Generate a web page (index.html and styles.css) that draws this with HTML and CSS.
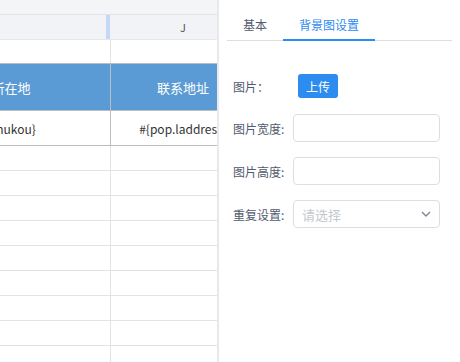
FILE: index.html
```html
<!DOCTYPE html>
<html lang="zh-CN">

<head>
    <meta charset="UTF-8">
    <title>背景图设置</title>
    <link rel="stylesheet" href="styles.css">
</head>

<body>
    <div class="sheet">
        <div class="topbar"></div>
        <div class="grid">
            <div class="row col-head">
                <div class="cell col-i handle">I</div>
                <div class="cell col-j">J</div>
            </div>
            <div class="row blank">
                <div class="cell col-i"></div>
                <div class="cell col-j"></div>
            </div>
            <div class="row title">
                <div class="cell col-i">户口所在地</div>
                <div class="cell col-j">联系地址</div>
            </div>
            <div class="row data">
                <div class="cell col-i">#{pop.hukou}</div>
                <div class="cell col-j">#{pop.laddress}</div>
            </div>
            <div class="row"><div class="cell col-i"></div><div class="cell col-j"></div></div>
            <div class="row"><div class="cell col-i"></div><div class="cell col-j"></div></div>
            <div class="row"><div class="cell col-i"></div><div class="cell col-j"></div></div>
            <div class="row"><div class="cell col-i"></div><div class="cell col-j"></div></div>
            <div class="row"><div class="cell col-i"></div><div class="cell col-j"></div></div>
            <div class="row"><div class="cell col-i"></div><div class="cell col-j"></div></div>
            <div class="row"><div class="cell col-i"></div><div class="cell col-j"></div></div>
            <div class="row"><div class="cell col-i"></div><div class="cell col-j"></div></div>
            <div class="row"><div class="cell col-i"></div><div class="cell col-j"></div></div>
        </div>
    </div>

    <div class="panel">
        <div class="tabs">
            <div class="tab">基本</div>
            <div class="tab active">背景图设置</div>
        </div>

        <div class="form">
            <div class="form-row upload-row">
                <label>图片：</label>
                <button class="btn">上传</button>
            </div>
            <div class="form-row">
                <label>图片宽度:</label>
                <input type="text" class="field">
            </div>
            <div class="form-row">
                <label>图片高度:</label>
                <input type="text" class="field">
            </div>
            <div class="form-row">
                <label>重复设置:</label>
                <div class="field select">
                    <span class="placeholder">请选择</span>
                    <svg class="arrow" width="10" height="6" viewBox="0 0 10 6">
                        <path d="M1 1 L5 5 L9 1" fill="none" stroke="#808695" stroke-width="1.4" />
                    </svg>
                </div>
            </div>
        </div>
    </div>
</body>

</html>
```

FILE: styles.css
```css
body {
    margin: 0;
    display: flex;
    height: 362px;
    overflow: hidden;
    font-family: "Noto Sans CJK SC", "Liberation Sans", sans-serif;
    background: #fff;
}

/* Sheet */
.sheet {
    width: 217px;
    flex-shrink: 0;
    overflow: hidden;
}

.topbar {
    height: 14px;
    background-color: #f4f5f7;
    border-bottom: 1px solid #dfe1e5;
}

.grid {
    margin-left: -114px;
    width: 370px;
}

.row {
    display: flex;
    height: 24px;
    border-bottom: 1px solid #e3e3e3;
}

.cell {
    box-sizing: border-box;
    display: flex;
    align-items: center;
    justify-content: center;
    white-space: nowrap;
    font-size: 13px;
    color: #333;
    border-right: 1px solid #e3e3e3;
}

.col-i {
    width: 225px;
}

.col-j {
    width: 145px;
}

.col-head {
    background-color: #f2f3f7;
    border-bottom-color: #e6e7eb;
}

.col-head .cell {
    font-size: 11px;
    color: #555;
    border-right-color: transparent;
}

.handle {
    position: relative;
}

.handle::after {
    content: "";
    position: absolute;
    right: 0;
    top: 0;
    width: 4px;
    height: 100%;
    background-color: #c6d8f7;
}

.blank {
    height: 23px;
    border-bottom-color: #b9bcc2;
}

.title {
    height: 46px;
    background-color: #5b9bd5;
    border-bottom-color: #b9bcc2;
}

.title .cell {
    color: #fff;
    border-right-color: #b9bcc2;
}

.data {
    height: 34px;
    border-bottom-color: #b9bcc2;
}

.data .cell {
    font-size: 12px;
    border-right-color: #b9bcc2;
}

/* Side panel */
.panel {
    flex: 1;
    border-left: 2px solid #e8e9eb;
    background: #fff;
}

.tabs {
    display: flex;
    margin: 0 8px;
    height: 40px;
    border-bottom: 1px solid #dcdee2;
}

.tab {
    position: relative;
    padding: 10px 16px 0;
    line-height: 30px;
    font-size: 12px;
    color: #515a6e;
}

.tab.active {
    color: #2d8cf0;
}

.tab.active::after {
    content: "";
    position: absolute;
    left: 0;
    right: 0;
    bottom: -1px;
    height: 2px;
    background-color: #2d8cf0;
}

.form {
    padding: 33px 20px 0 14px;
}

.form-row {
    display: flex;
    align-items: center;
    height: 28px;
    margin-bottom: 15px;
}

.upload-row {
    height: 24px;
    margin-bottom: 16px;
}

label {
    width: 60px;
    flex-shrink: 0;
    font-size: 12px;
    color: #515a6e;
}

.btn {
    margin-left: 5px;
    width: 40px;
    height: 24px;
    padding: 0;
    border: none;
    border-radius: 3px;
    background-color: #2d8cf0;
    color: #fff;
    font-family: inherit;
    font-size: 12px;
}

.field {
    box-sizing: border-box;
    width: 147px;
    height: 28px;
    border: 1px solid #dcdee2;
    border-radius: 4px;
    outline: none;
    background: #fff;
}

.select {
    display: flex;
    align-items: center;
    justify-content: space-between;
    padding: 0 8px;
}

.placeholder {
    font-size: 13px;
    color: #c5c8ce;
}
```
